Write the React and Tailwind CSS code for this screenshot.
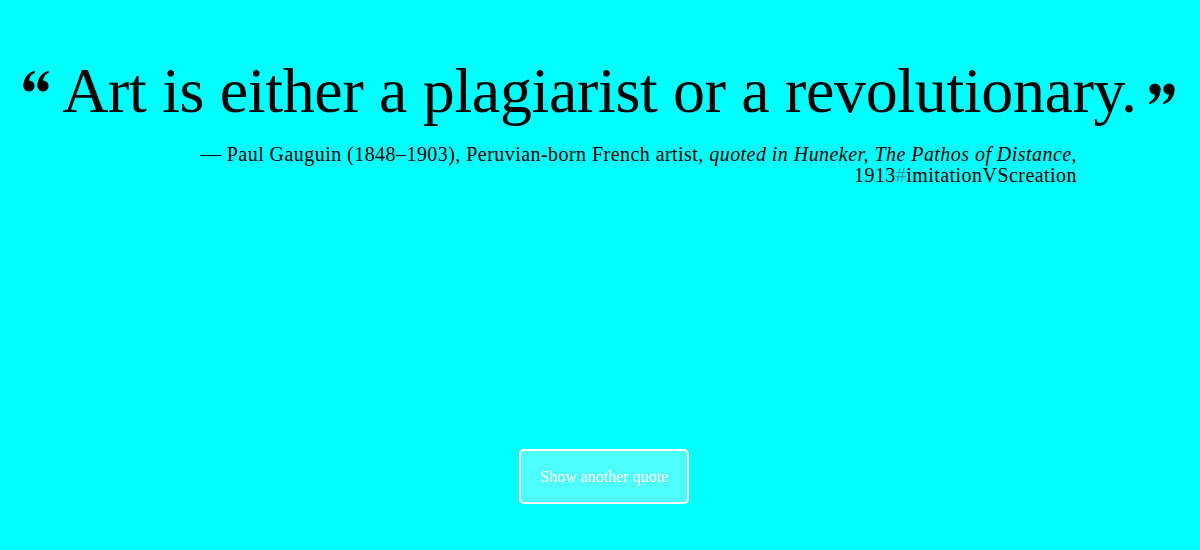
import React from "react";

function QuoteMark({ className }) {
  return (
    <svg viewBox="0 0 26 22" width="26" height="22" className={className} fill="#000">
      {[0, 14].map((dx) => (
        <g key={dx} transform={`translate(${dx},0)`}>
          <circle cx="6" cy="16" r="5.6" />
          <path d="M0.5 15.5 C0.5 8.5 4.5 3 11.5 0.8 L12 2.6 C8.2 4.5 6.2 7.6 6.2 10.6 L0.9 17 Z" />
        </g>
      ))}
    </svg>
  );
}

export default function App() {
  const serif = { fontFamily: '"Liberation Serif", "Times New Roman", serif' };
  return (
    <div className="min-h-[550px] w-full bg-[#00ffff] flex flex-col items-center text-black" style={serif}>
      <div className="flex items-start pt-[54px] mr-[2px]">
        <QuoteMark className="mt-[16px] mr-[13px] shrink-0" />
        <h1 className="text-[64px] leading-[74px] font-normal whitespace-nowrap tracking-[-0.35px]">
          Art is either a plagiarist or a revolutionary.
        </h1>
        <QuoteMark className="mt-[29px] ml-[12px] shrink-0 rotate-180" />
      </div>
      <div className="mt-[16px] w-[960px] pr-[3px] text-right text-[20px] leading-[21px] tracking-[0.45px]">
        — Paul Gauguin (1848–1903), Peruvian-born French artist, <i>quoted in Huneker, The Pathos of Distance</i>,
        <br />
        1913<span className="text-[#2f9c9e]">#</span>imitationVScreation
      </div>
      <button className="mt-auto mb-[46px] ml-[8px] w-[170px] h-[55px] rounded-[5px] border-2 border-white bg-[#4dffff] text-white text-[16px]">
        Show another quote
      </button>
    </div>
  );
}
